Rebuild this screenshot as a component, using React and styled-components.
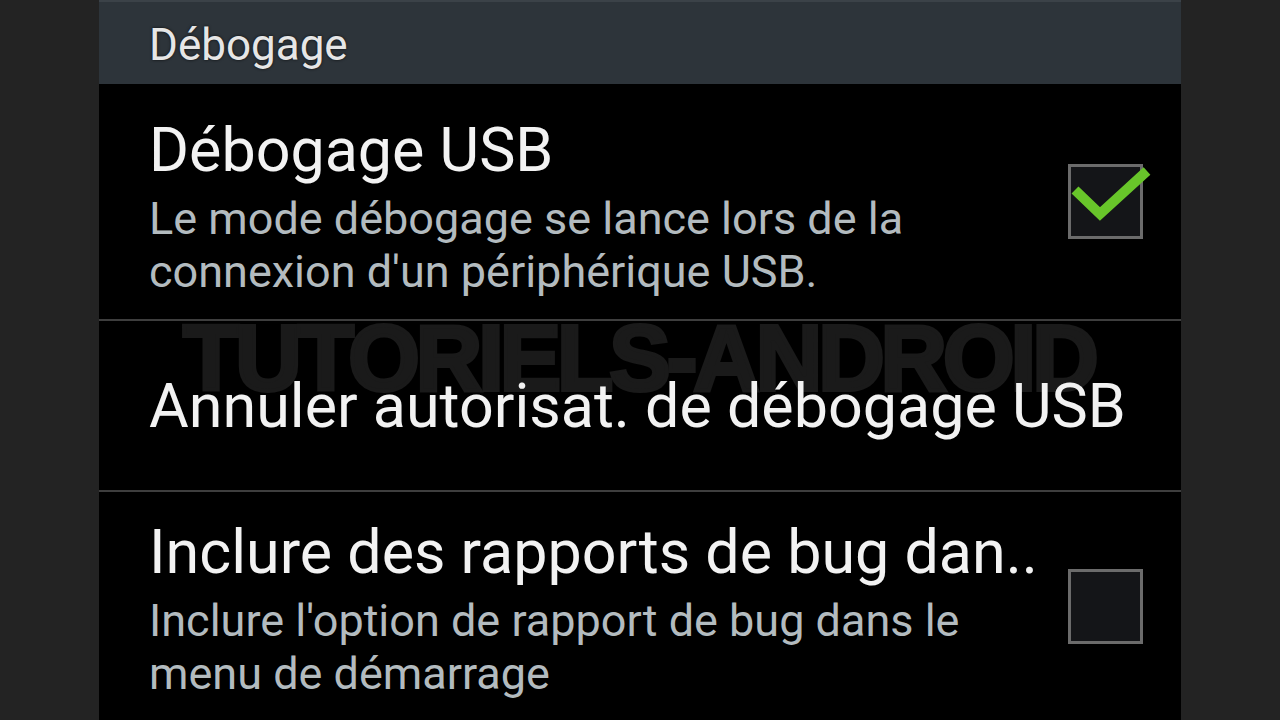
import React from "react";
import styled, { createGlobalStyle } from "styled-components";

const Global = createGlobalStyle`
  html, body { margin: 0; padding: 0; background: #232323; }
  body { font-family: Roboto, "Noto Sans", sans-serif; }
  #root { width: 1280px; height: 720px; overflow: hidden; }
`;

const Stage = styled.div`
  width: 1280px;
  height: 720px;
  background: #232323;
  display: flex;
  justify-content: flex-start;
  padding-left: 99px;
  box-sizing: border-box;
`;

const Screen = styled.div`
  position: relative;
  width: 1082px;
  height: 720px;
  background: #000;
  display: flex;
  flex-direction: column;
  overflow: hidden;
`;

const Header = styled.div`
  position: relative;
  z-index: 1;
  height: 84px;
  flex: none;
  box-sizing: border-box;
  background: #2d343a;
  border-top: 2px solid #3b4248;
  padding: 4px 0 0 50px;
  display: flex;
  align-items: center;
  color: #e6e6e6;
  font-size: 44px;
  text-shadow: 0 0 3px rgba(0, 0, 0, 0.8);
`;

const Row = styled.div`
  position: relative;
  z-index: 1;
  height: ${(p) => p.$h}px;
  flex: none;
  box-sizing: border-box;
  display: flex;
  align-items: ${(p) => (p.$top != null ? "flex-start" : "center")};
  padding: ${(p) => p.$top || 0}px 38px 0 50px;
  border-bottom: ${(p) => (p.$last ? "none" : "2px solid #3e3e3e")};
`;

const TextCol = styled.div`
  flex: 1;
  min-width: 0;
  display: flex;
  flex-direction: column;
  gap: 10px;
`;

const Title = styled.div`
  color: #f2f2f2;
  font-size: 61px;
  line-height: 64px;
  white-space: nowrap;
`;

const Summary = styled.div`
  color: #b3bbbf;
  font-size: 45px;
  line-height: 53px;
  max-width: 850px;
`;

const Side = styled.div`
  align-self: center;
  flex: none;
  margin-top: ${(p) => p.$mt || 0}px;
`;

const Box = styled.div`
  position: relative;
  width: 75px;
  height: 75px;
  box-sizing: border-box;
  border: 3px solid #6b6b6b;
  background: #141518;
`;

const Check = styled.svg`
  position: absolute;
  left: -4px;
  top: -8px;
  overflow: visible;
`;

const Watermark = styled.div`
  position: absolute;
  z-index: 0;
  left: 84px;
  top: 306px;
  font-family: "Liberation Sans", Arial, sans-serif;
  font-weight: 700;
  font-size: 92px;
  letter-spacing: -4px;
  color: #1a1a1a;
  -webkit-text-stroke: 4px #1a1a1a;
  pointer-events: none;
  white-space: nowrap;
`;

function CheckBox({ checked, mt }) {
  return (
    <Side $mt={mt}>
      <Box>
        {checked && (
          <Check width="90" height="60" viewBox="0 0 90 60">
            <polyline
              points="8,31 33,55 80,12"
              fill="none"
              stroke="#68c52a"
              strokeWidth="10"
              strokeLinejoin="miter"
            />
          </Check>
        )}
      </Box>
    </Side>
  );
}

export default function App() {
  return (
    <Stage>
      <Global />
      <Screen>
        <Header>Débogage</Header>
        <Watermark>TUTORIELS-ANDROID</Watermark>
        <Row $h={237} $top={34}>
          <TextCol>
            <Title>Débogage USB</Title>
            <Summary>Le mode débogage se lance lors de la connexion d'un périphérique USB.</Summary>
          </TextCol>
          <CheckBox checked mt={-34} />
        </Row>
        <Row $h={171}>
          <TextCol>
            <Title>Annuler autorisat. de débogage USB</Title>
          </TextCol>
        </Row>
        <Row $h={228} $top={28} $last>
          <TextCol>
            <Title>Inclure des rapports de bug dan..</Title>
            <Summary>Inclure l'option de rapport de bug dans le menu de démarrage</Summary>
          </TextCol>
          <CheckBox mt={-28} />
        </Row>
      </Screen>
    </Stage>
  );
}
